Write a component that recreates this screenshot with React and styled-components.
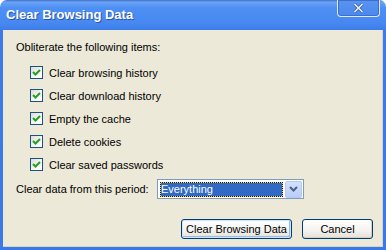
import React from "react";
import styled, { createGlobalStyle } from "styled-components";

const GlobalStyle = createGlobalStyle`
  html, body {
    margin: 0;
    padding: 0;
    background: #ffffff;
  }
  * {
    box-sizing: border-box;
  }
`;

const Window = styled.div`
  width: 386px;
  height: 250px;
  display: flex;
  flex-direction: column;
  overflow: hidden;
  border-radius: 7px 7px 0 0;
  background: linear-gradient(
    to bottom,
    #3f6fc4 0px,
    #6ba3f7 2px,
    #4d8ff3 8px,
    #4688f0 24px,
    #3b7ce9 30px,
    #3a79e6 100%
  );
  font-family: "Liberation Sans", Arial, sans-serif;
  font-size: 11px;
  color: #000;
`;

const TitleBar = styled.div`
  height: 30px;
  display: flex;
  align-items: flex-start;
  justify-content: space-between;
  padding: 0 6px 0 6px;
`;

const Title = styled.span`
  margin-top: 7px;
  font-family: "Liberation Sans", Arial, sans-serif;
  font-weight: bold;
  font-size: 13px;
  line-height: 16px;
  color: #fff;
  text-shadow: 1px 1px 0 #2a55a8;
`;

const CloseButton = styled.div`
  width: 43px;
  height: 17px;
  display: flex;
  align-items: center;
  justify-content: center;
  border: 1px solid #dfe9fb;
  border-top: none;
  border-radius: 0 0 4px 4px;
  background: linear-gradient(#5a94f0, #4a88ee);
  box-shadow: inset 0 0 0 1px #3b6fcf;
`;

const Body = styled.div`
  flex: 1;
  margin: 0 3px 3px 3px;
  background: #ece9d8;
  display: flex;
  flex-direction: column;
  padding: 10px 10px 8px 13px;
  box-shadow: inset -1px -1px 0 #d8d4c2;
`;

const Text = styled.div`
  line-height: 14px;
  white-space: nowrap;
`;

const CheckList = styled.div`
  display: flex;
  flex-direction: column;
  margin-top: 7px;
  padding-left: 14px;
`;

const CheckRow = styled.label`
  height: 23px;
  display: flex;
  align-items: center;
  gap: 6px;
`;

const Box = styled.span`
  width: 13px;
  height: 13px;
  border: 1px solid #1c5180;
  background: linear-gradient(135deg, #dcdcd7 0%, #ffffff 80%);
  display: flex;
  align-items: center;
  justify-content: center;
`;

const PeriodRow = styled.div`
  margin-top: 3px;
  height: 20px;
  display: flex;
  align-items: center;
`;

const PeriodLabel = styled(Text)`
  width: 141px;
`;

const Select = styled.div`
  width: 147px;
  height: 20px;
  border: 1px solid #7f9db9;
  background: #fff;
  display: flex;
  align-items: center;
  padding: 0 1px 0 2px;
  gap: 2px;
`;

const Selected = styled.span`
  flex: 1;
  height: 15px;
  line-height: 13px;
  color: #fff;
  padding-left: 0;
  border: 1px dotted #1a1a1a;
  background: linear-gradient(#316ac5, #316ac5) padding-box,
    #f2d063 border-box;
`;

const DropButton = styled.span`
  width: 17px;
  height: 17px;
  border: 1px solid #b4c8f6;
  border-radius: 2px;
  background: linear-gradient(#d4e0fc, #b8cdf9);
  display: flex;
  align-items: center;
  justify-content: center;
`;

const ButtonRow = styled.div`
  margin-top: 20px;
  display: flex;
  justify-content: flex-end;
  gap: 10px;
`;

const Button = styled.div`
  width: ${(p) => p.$w}px;
  height: 20px;
  border: 1px solid #003c74;
  border-radius: 3px;
  background: linear-gradient(#ffffff, #f3f2ee 60%, #e3e0d6);
  display: flex;
  align-items: center;
  justify-content: center;
  line-height: 14px;
  box-shadow: ${(p) =>
    p.$default
      ? "inset 0 0 0 1px #cee7ff, inset -1px -1px 0 1px #98b8ea"
      : "inset -1px -1px 0 #d6d0c5"};
`;

const items = [
  "Clear browsing history",
  "Clear download history",
  "Empty the cache",
  "Delete cookies",
  "Clear saved passwords",
];

const Check = () => (
  <svg width="9" height="9" viewBox="0 0 9 9">
    <path d="M1 4 L3.5 6.5 L8 2" fill="none" stroke="#21a121" strokeWidth="2" />
  </svg>
);

export default function App() {
  return (
    <>
      <GlobalStyle />
      <Window>
        <TitleBar>
          <Title>Clear Browsing Data</Title>
          <CloseButton>
            <svg width="11" height="10" viewBox="0 0 11 10">
              <path
                d="M1.5 1 L9.5 9 M9.5 1 L1.5 9"
                stroke="#3a5d9c"
                strokeWidth="3"
              />
              <path
                d="M1.5 1 L9.5 9 M9.5 1 L1.5 9"
                stroke="#e8eefb"
                strokeWidth="1.6"
              />
            </svg>
          </CloseButton>
        </TitleBar>
        <Body>
          <Text>Obliterate the following items:</Text>
          <CheckList>
            {items.map((item) => (
              <CheckRow key={item}>
                <Box>
                  <Check />
                </Box>
                <Text>{item}</Text>
              </CheckRow>
            ))}
          </CheckList>
          <PeriodRow>
            <PeriodLabel>Clear data from this period:</PeriodLabel>
            <Select>
              <Selected>Everything</Selected>
              <DropButton>
                <svg width="9" height="6" viewBox="0 0 9 6">
                  <path
                    d="M1 1 L4.5 4.5 L8 1"
                    fill="none"
                    stroke="#4d6185"
                    strokeWidth="2"
                  />
                </svg>
              </DropButton>
            </Select>
          </PeriodRow>
          <ButtonRow>
            <Button $w={111} $default>
              Clear Browsing Data
            </Button>
            <Button $w={71}>Cancel</Button>
          </ButtonRow>
        </Body>
      </Window>
    </>
  );
}
